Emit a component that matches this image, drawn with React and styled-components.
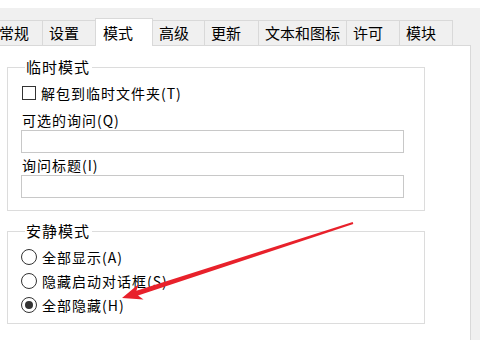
import React from 'react';
import styled, { createGlobalStyle } from 'styled-components';

const GlobalStyle = createGlobalStyle`
  html, body {
    margin: 0;
    padding: 0;
    background: #ffffff;
  }
  body {
    font-family: "Noto Sans CJK SC", "Noto Sans", sans-serif;
    color: #000;
  }
`;

const Screen = styled.div`
  position: relative;
  width: 480px;
  height: 340px;
  overflow: hidden;
  padding-top: 8px;
  box-sizing: border-box;
  background: #ffffff;
`;

const Frame = styled.div`
  height: 332px;
  background: #f0f0f0;
`;

const TabStrip = styled.div`
  display: flex;
  align-items: flex-end;
  height: 37px;
`;

const Tab = styled.div`
  position: relative;
  box-sizing: border-box;
  width: ${(props) => props.$width}px;
  height: ${(props) => (props.$active ? 28 : 25)}px;
  margin-left: -1px;
  margin-bottom: ${(props) => (props.$active ? -1 : 0)}px;
  padding-left: ${(props) => (props.$active ? 7 : 6)}px;
  border: 1px solid #d9d9d9;
  border-bottom: none;
  background: ${(props) => (props.$active ? '#ffffff' : '#f0f0f0')};
  z-index: ${(props) => (props.$active ? 2 : 1)};
  font-size: 15px;
  line-height: ${(props) => (props.$active ? 27 : 23)}px;
  white-space: nowrap;

  &:first-child {
    margin-left: -8px;
  }
`;

const Pane = styled.div`
  width: 471px;
  height: 295px;
  box-sizing: border-box;
  background: #ffffff;
  border-top: 1px solid #d9d9d9;
  border-right: 1px solid #d9d9d9;
  padding-left: 7px;
  display: flex;
  flex-direction: column;
`;

const Group = styled.fieldset`
  box-sizing: border-box;
  width: 418px;
  margin: ${(props) => props.$top}px 0 0 0;
  padding: 0 0 ${(props) => props.$bottom}px 13px;
  border: 1px solid #dcdcdc;
  display: flex;
  flex-direction: column;
  min-width: 0;
`;

const Legend = styled.legend`
  margin-left: 4px;
  padding: 0 2px 0 1px;
  font-size: 15px;
  line-height: 20px;
  letter-spacing: 1px;
`;

const Row = styled.label`
  display: flex;
  align-items: center;
  height: 20px;
  margin-top: ${(props) => props.$top}px;
  margin-left: 1px;
  font-size: 14px;
  letter-spacing: 1px;
`;

const Box = styled.span`
  width: 14px;
  height: 14px;
  box-sizing: border-box;
  border: 1px solid #333;
  background: #fff;
  margin-right: 5px;
`;

const Radio = styled.span`
  width: 16px;
  height: 16px;
  box-sizing: border-box;
  border: 1px solid #333;
  border-radius: 50%;
  background: #fff;
  margin-left: -1px;
  margin-right: 5px;
  display: flex;
  align-items: center;
  justify-content: center;

  &::after {
    content: '';
    width: 8px;
    height: 8px;
    border-radius: 50%;
    background: ${(props) => (props.$checked ? '#333' : 'transparent')};
  }
`;

const FieldLabel = styled.div`
  margin-top: ${(props) => props.$top}px;
  margin-left: 1px;
  height: 20px;
  font-size: 14px;
  line-height: 20px;
  letter-spacing: 1px;
`;

const TextBox = styled.div`
  width: 383px;
  height: 23px;
  box-sizing: border-box;
  border: 1px solid #c8c8c8;
  background: #fff;
`;

const Annotation = styled.svg`
  position: absolute;
  left: 0;
  top: 0;
  pointer-events: none;
`;

const tabs = [
  { label: '常规', width: 51 },
  { label: '设置', width: 54 },
  { label: '模式', width: 58, active: true },
  { label: '高级', width: 53 },
  { label: '更新', width: 55 },
  { label: '文本和图标', width: 89 },
  { label: '许可', width: 54 },
  { label: '模块', width: 54 },
];

const modes = [
  { label: '全部显示(A)', top: 6 },
  { label: '隐藏启动对话框(S)', top: 4 },
  { label: '全部隐藏(H)', top: 4, checked: true },
];

const App = () => {
  return (
    <Screen>
      <GlobalStyle />
      <Frame>
        <TabStrip>
          {tabs.map((t) => (
            <Tab key={t.label} $width={t.width} $active={t.active}>
              {t.label}
            </Tab>
          ))}
        </TabStrip>
        <Pane>
          <Group $top={11} $bottom={12}>
            <Legend>临时模式</Legend>
            <Row $top={6}>
              <Box />
              解包到临时文件夹(T)
            </Row>
            <FieldLabel $top={7}>可选的询问(Q)</FieldLabel>
            <TextBox />
            <FieldLabel $top={2}>询问标题(I)</FieldLabel>
            <TextBox />
          </Group>
          <Group $top={10} $bottom={8}>
            <Legend>安静模式</Legend>
            {modes.map((m) => (
              <Row key={m.label} $top={m.top}>
                <Radio $checked={m.checked} />
                {m.label}
              </Row>
            ))}
          </Group>
        </Pane>
      </Frame>
      <Annotation width="480" height="340" viewBox="0 0 480 340">
        <polygon
          fill="#e8212b"
          points="122,298 138.5,284.2 136.4,290.7 352.7,222 353.3,224 138,295.5 143.5,299.4"
        />
      </Annotation>
    </Screen>
  );
};

export default App;
